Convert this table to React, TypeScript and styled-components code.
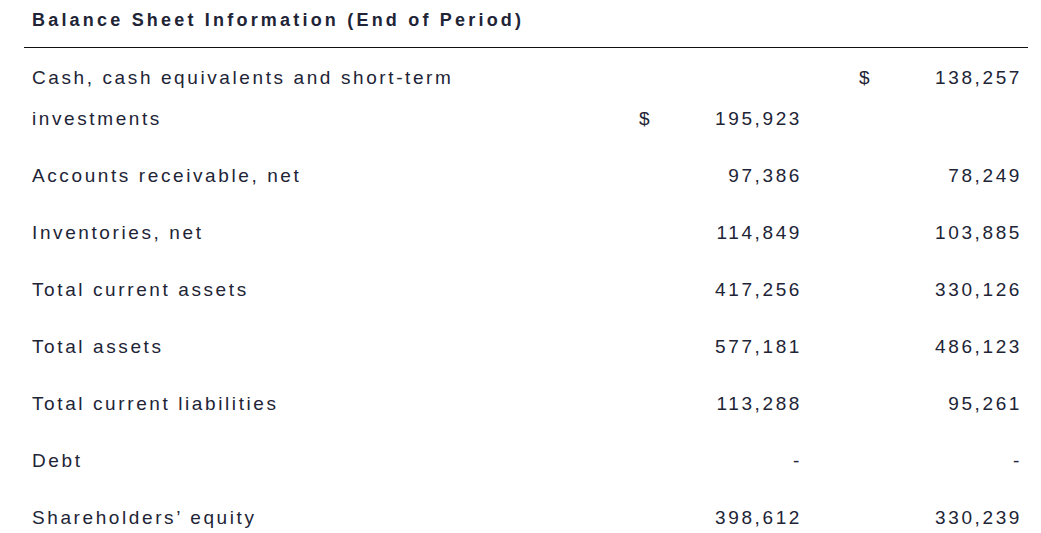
import React from "react";
import styled, { createGlobalStyle } from "styled-components";

const Global = createGlobalStyle`
  html, body { margin: 0; padding: 0; background: #ffffff; }
  body { font-family: "Liberation Sans", Arial, sans-serif; color: #212436; }
`;

const Wrapper = styled.div`
  width: 1004px;
  margin-left: 24px;
`;

const Grid = styled.div`
  display: grid;
  grid-template-columns: 564px 220px 220px;
`;

const Title = styled.div`
  grid-column: 1 / -1;
  font-size: 18px;
  font-weight: 700;
  letter-spacing: 3.2px;
  line-height: 24px;
  padding: 8px 8px 15px 8px;
  border-bottom: 1px solid #111111;
  margin-bottom: 0.5px;
`;

const Label = styled.div`
  font-size: 19px;
  letter-spacing: 2.6px;
  line-height: 41px;
  padding: 8px 8px 8px 8px;
`;

const Value = styled.div<{ $valign?: "top" | "bottom" }>`
  display: flex;
  justify-content: space-between;
  align-self: ${(p) => (p.$valign === "bottom" ? "end" : "start")};
  font-size: 19px;
  letter-spacing: 2.6px;
  line-height: 41px;
  padding: 8px 6px 8px 51px;
`;

const Currency = styled.span``;
const Amount = styled.span`
  margin-left: auto;
  text-align: right;
`;

type Row = {
  label: string;
  a: string;
  b: string;
  dollar?: boolean;
};

const rows: Row[] = [
  { label: "Cash, cash equivalents and short-term investments", a: "195,923", b: "138,257", dollar: true },
  { label: "Accounts receivable, net", a: "97,386", b: "78,249" },
  { label: "Inventories, net", a: "114,849", b: "103,885" },
  { label: "Total current assets", a: "417,256", b: "330,126" },
  { label: "Total assets", a: "577,181", b: "486,123" },
  { label: "Total current liabilities", a: "113,288", b: "95,261" },
  { label: "Debt", a: "-", b: "-" },
  { label: "Shareholders\u2019 equity", a: "398,612", b: "330,239" },
];

export default function App() {
  return (
    <>
      <Global />
      <Wrapper>
        <Grid>
          <Title>Balance Sheet Information (End of Period)</Title>
          {rows.map((r) => (
            <React.Fragment key={r.label}>
              <Label>{r.label}</Label>
              <Value $valign={r.dollar ? "bottom" : "top"}>
                {r.dollar && <Currency>$</Currency>}
                <Amount>{r.a}</Amount>
              </Value>
              <Value $valign="top">
                {r.dollar && <Currency>$</Currency>}
                <Amount>{r.b}</Amount>
              </Value>
            </React.Fragment>
          ))}
        </Grid>
      </Wrapper>
    </>
  );
}
